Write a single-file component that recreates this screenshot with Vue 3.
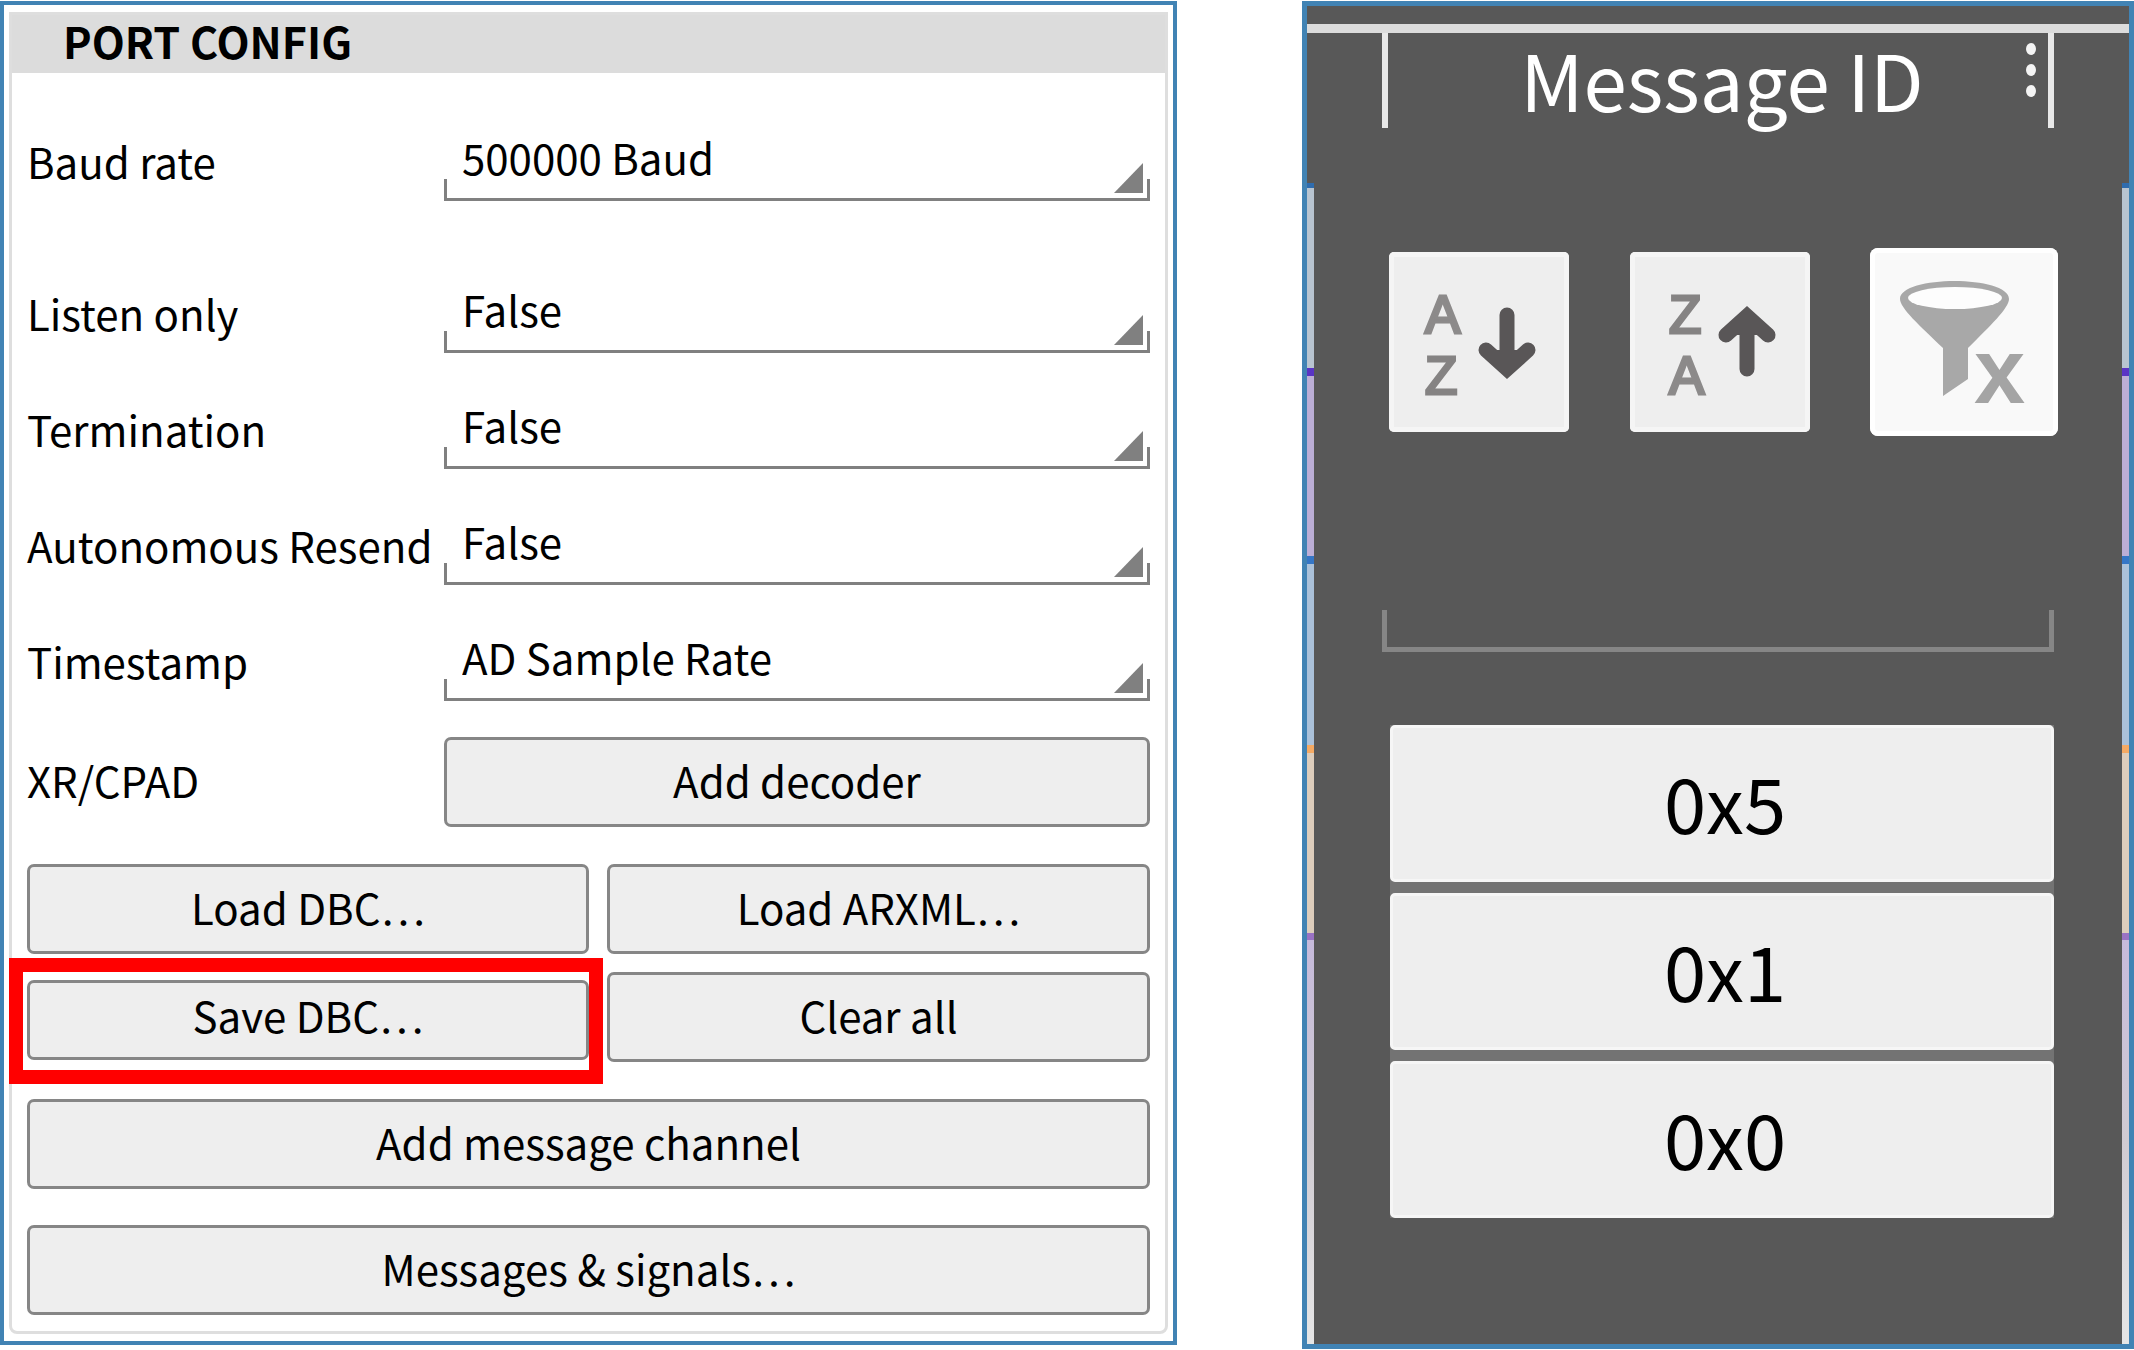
<script setup>
import { ref } from 'vue'

const settings = ref([
  { id: 'baud', label: 'Baud rate', value: '500000 Baud', options: ['500000 Baud', '250000 Baud'], spaced: true },
  { id: 'listen', label: 'Listen only', value: 'False', options: ['False', 'True'] },
  { id: 'termination', label: 'Termination', value: 'False', options: ['False', 'True'] },
  { id: 'resend', label: 'Autonomous Resend', value: 'False', options: ['False', 'True'] },
  { id: 'timestamp', label: 'Timestamp', value: 'AD Sample Rate', options: ['AD Sample Rate'] },
])
const messageIds = ['0x5', '0x1', '0x0']
const filter = ref('')
</script>

<template>
  <main class="page">
    <section class="port">
      <div class="group">
        <h1 class="title">PORT CONFIG</h1>
        <div class="body">
          <div v-for="s in settings" :key="s.id" class="row" :class="{ spaced: s.spaced }">
            <label class="name" :for="s.id">{{ s.label }}</label>
            <div class="field">
              <select :id="s.id" v-model="s.value">
                <option v-for="o in s.options" :key="o">{{ o }}</option>
              </select>
              <svg class="corner" viewBox="0 0 29 30"><path d="M29 0V30H0Z" fill="#808080" /></svg>
            </div>
          </div>
          <div class="row decoder">
            <span class="xr">XR/CPAD</span>
            <button class="btn" type="button">Add decoder</button>
          </div>
          <div class="files">
            <button class="btn" type="button">Load DBC…</button>
            <button class="btn" type="button">Load ARXML…</button>
            <div class="save">
              <button class="btn short" type="button">Save DBC…</button>
              <div class="highlight"></div>
            </div>
            <button class="btn" type="button">Clear all</button>
          </div>
          <div class="actions">
            <button class="btn" type="button">Add message channel</button>
            <button class="btn" type="button">Messages &amp; signals…</button>
          </div>
        </div>
      </div>
    </section>

    <section class="messages">
      <div class="edge"></div>
      <div class="column">
        <header class="head">
          <h2>Message ID</h2>
          <button class="menu" type="button" aria-label="Column menu">
            <svg viewBox="0 0 14 60">
              <g fill="#f4f4f4">
                <ellipse cx="6" cy="9" rx="5" ry="6" />
                <ellipse cx="6" cy="30" rx="5" ry="6" />
                <ellipse cx="6" cy="51" rx="5" ry="6" />
              </g>
            </svg>
          </button>
        </header>
        <div class="tools">
          <button class="tool" type="button" aria-label="Sort ascending">
            <svg viewBox="0 0 180 180">
              <text x="36" y="81" fill="#8c8a8a" stroke="#8c8a8a">A</text>
              <text x="36" y="142" fill="#858383" stroke="#858383">Z</text>
              <path d="M118 63V112M97 98L118 117L139 98" fill="#595657" stroke="#595657" stroke-width="15" stroke-linecap="round" />
            </svg>
          </button>
          <button class="tool" type="button" aria-label="Sort descending">
            <svg viewBox="0 0 180 180">
              <text x="39" y="81" fill="#858383" stroke="#858383">Z</text>
              <text x="39" y="142" fill="#8c8a8a" stroke="#8c8a8a">A</text>
              <path d="M117 117V68M96 83L117 64L138 83" fill="#595657" stroke="#595657" stroke-width="15" stroke-linecap="round" />
            </svg>
          </button>
          <button class="tool clear" type="button" aria-label="Clear filter">
            <svg viewBox="0 0 188 188">
              <path d="M30 51C30 27 139 27 139 51C139 60 120 78 98 100V131L73 148V100C50 78 30 60 30 51Z" fill="#a8a8a8" />
              <ellipse cx="85" cy="50" rx="47" ry="11" fill="#fdfdfd" />
              <text x="104" y="155" class="cross">x</text>
            </svg>
          </button>
        </div>
        <input v-model="filter" class="search" type="text" aria-label="Filter message ID" />
        <div class="list">
          <button v-for="id in messageIds" :key="id" class="item" type="button">{{ id }}</button>
        </div>
      </div>
      <div class="edge"></div>
    </section>
  </main>
</template>

<style>
body {
  margin: 0;
  background: #fff;
}
</style>

<style scoped>
* {
  box-sizing: border-box;
}

.page {
  display: grid;
  grid-template-columns: 1177fr 832fr;
  gap: 125px;
  align-items: start;
  padding-top: 1px;
  font-family: "Noto Sans CJK KR", "Noto Sans CJK SC", sans-serif;
  font-size: 42px;
  color: #000;
}

button,
select,
input {
  margin: 0;
  padding: 0;
  font: inherit;
  color: inherit;
}

h1,
h2 {
  margin: 0;
}

.port {
  padding: 7px 5px;
  border: 4px solid #4183b4;
}

.group {
  border: 3px solid #dedede;
  border-radius: 0 0 8px 8px;
}

.title {
  padding: 0 0 7px 51px;
  background: #dcdcdc;
  font-size: 43px;
  font-weight: 700;
  line-height: 51px;
}

.body {
  padding: 38px 15px 16px;
}

.row {
  display: grid;
  grid-template-columns: 417fr 706fr;
  margin-bottom: 26px;
  line-height: 90px;
}

.spaced {
  margin-bottom: 62px;
}

.name {
  padding-top: 5px;
  height: 90px;
  white-space: nowrap;
}

.field {
  position: relative;
  height: 90px;
}

.field select {
  display: block;
  width: 100%;
  height: 90px;
  padding: 2px 0 0 18px;
  border: 0;
  border-radius: 0;
  outline: 0;
  appearance: none;
  line-height: 88px;
  background:
    linear-gradient(#808080, #808080) left bottom / 3px 22px no-repeat,
    linear-gradient(#808080, #808080) right bottom / 3px 22px no-repeat,
    linear-gradient(#808080, #808080) left bottom / 100% 3px no-repeat;
}

.corner {
  position: absolute;
  right: 7px;
  bottom: 8px;
  width: 29px;
  height: 30px;
  pointer-events: none;
}

.decoder {
  margin-top: 36px;
  margin-bottom: 37px;
}

.xr {
  height: 86px;
  line-height: 86px;
}

.btn {
  width: 100%;
  height: 90px;
  padding-bottom: 4px;
  border: 3px solid #868686;
  border-radius: 7px;
  background: #eee;
  line-height: 78px;
  white-space: nowrap;
}

.files {
  display: grid;
  grid-template-columns: 562fr 543fr;
  gap: 18px;
}

.save {
  position: relative;
  padding-top: 8px;
}

.short {
  height: 80px;
  padding-bottom: 10px;
  line-height: 64px;
}

.highlight {
  position: absolute;
  inset: -14px -14px -22px -18px;
  border: 14px solid #f00;
  pointer-events: none;
}

.actions {
  display: grid;
  gap: 36px;
  margin-top: 37px;
}

.messages {
  display: grid;
  grid-template-columns: 7px 1fr 7px;
  min-height: 1348px;
  border: 5px solid #4183b4;
  background: linear-gradient(#585858 18px, #dcdcdc 18px, #dcdcdc 27px, #585858 27px);
}

.edge {
  margin-top: 177px;
  background: linear-gradient(
    #2f6cae 0 5px,
    #b8c4d0 5px 185px,
    #5a34c4 185px 193px,
    #bcaed6 193px 373px,
    #3576c6 373px 381px,
    #abc1d9 381px 562px,
    #f5aa64 562px 570px,
    #ddcdbc 570px 750px,
    #9a72c4 750px 757px,
    #c6badb 757px,
    #d0cbd2 958px,
    #e6e6e6
  );
}

.column {
  display: flex;
  flex-direction: column;
  padding: 27px 68px 125px;
}

.head {
  position: relative;
  display: flex;
  justify-content: center;
  height: 95px;
  padding-left: 8px;
  border: solid #e8e8e8;
  border-width: 0 6px;
  color: #fff;
}

.head h2 {
  font-size: 78px;
  font-weight: 400;
  line-height: 90px;
}

.menu {
  position: absolute;
  top: 7px;
  right: 9px;
  width: 14px;
  height: 60px;
  border: 0;
  background: none;
}

.menu svg,
.tool svg {
  display: block;
  width: 100%;
}

.tools {
  display: flex;
  justify-content: space-between;
  align-items: center;
  height: 188px;
  margin: 120px -4px 0 7px;
}

.tool {
  width: 180px;
  height: 180px;
  border: 0;
  border-radius: 5px;
  background: #eee;
  box-shadow: inset 0 0 0 5px #f5f5f5;
}

.tool text {
  font-size: 53px;
  font-family: "Liberation Sans", sans-serif;
  stroke-width: 3px;
}

.clear {
  width: 188px;
  height: 188px;
  border-radius: 8px;
  background: #f9f9f9;
  box-shadow: inset 0 0 0 5px #fff;
}

.tool .cross {
  font-size: 92px;
  font-weight: 700;
  fill: #a4a4a4;
}

.search {
  width: 100%;
  height: 120px;
  margin-top: 96px;
  padding: 0 16px;
  border: 0;
  outline: 0;
  color: #fff;
  background:
    linear-gradient(#868686, #868686) left bottom / 5px 42px no-repeat,
    linear-gradient(#868686, #868686) right bottom / 5px 42px no-repeat,
    linear-gradient(#868686, #868686) left bottom / 100% 5px no-repeat;
}

.list {
  display: grid;
  gap: 11px;
  margin: 73px 0 0 8px;
  background: #737373;
}

.item {
  height: 157px;
  padding: 0 0 5px 6px;
  border: 3px solid #f6f6f6;
  border-radius: 5px;
  background: #eee;
  font-size: 76px;
  line-height: 140px;
}
</style>
